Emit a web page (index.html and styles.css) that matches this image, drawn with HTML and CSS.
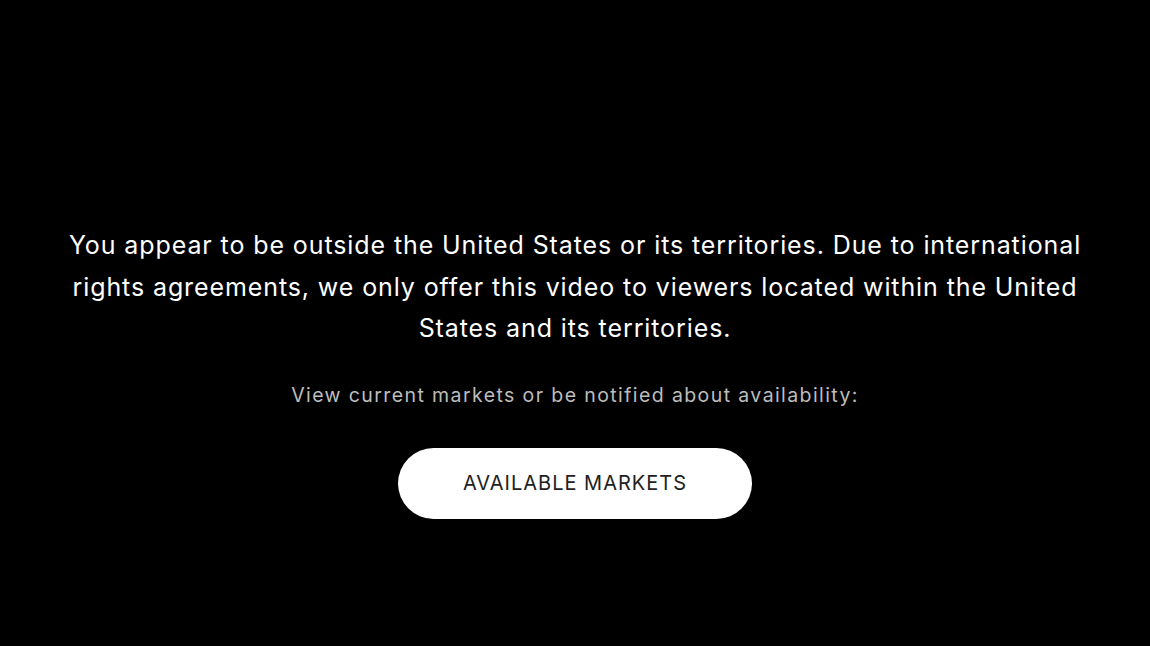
FILE: index.html
```html
<!DOCTYPE html>
<html lang="en">
<head>
<meta charset="utf-8">
<title>Unavailable</title>
<link rel="stylesheet" href="styles.css">
</head>
<body>
<main class="screen">
  <div class="message">
    <p class="lead">You appear to be outside the United States or its territories. Due to international rights agreements, we only offer this video to viewers located within the United States and its territories.</p>
    <p class="sub">View current markets or be notified about availability:</p>
    <button class="btn" type="button">AVAILABLE MARKETS</button>
  </div>
</main>
</body>
</html>
```

FILE: styles.css
```css
html, body {
  margin: 0;
  padding: 0;
  background: #000;
  height: 100%;
}
.screen {
  width: 1150px;
  height: 646px;
  background: #000;
  display: flex;
  justify-content: center;
  padding-top: 225px;
  box-sizing: border-box;
}
.message {
  width: 1060px;
  display: flex;
  flex-direction: column;
  align-items: center;
  text-align: center;
  font-family: Inter, "Liberation Sans", sans-serif;
}
.lead {
  margin: 0;
  color: #fff;
  font-size: 25px;
  line-height: 41.5px;
  letter-spacing: 0.9px;
}
.sub {
  margin: 30px 0 0;
  color: #bdbdbd;
  font-size: 19.5px;
  line-height: 30px;
  letter-spacing: 1.4px;
}
.btn {
  margin-top: 38px;
  width: 354px;
  height: 71px;
  border: none;
  border-radius: 36px;
  background: #fff;
  color: #222;
  font-family: Inter, "Liberation Sans", sans-serif;
  font-size: 20px;
  letter-spacing: 1px;
  cursor: pointer;
}
```
